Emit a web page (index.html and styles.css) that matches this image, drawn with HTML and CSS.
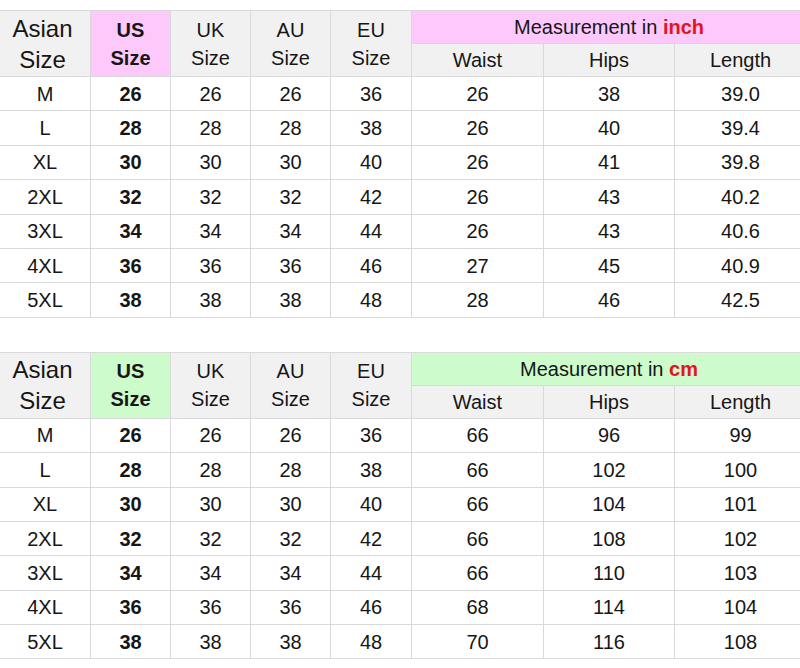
FILE: index.html
```html
<!DOCTYPE html>
<html lang="en">
<head>
<meta charset="utf-8">
<title>Size chart</title>
<link rel="stylesheet" href="styles.css">
</head>
<body>
<div class="page">
  <table class="chart chart-inch">
    <colgroup>
      <col class="c-asian"><col class="c-std"><col class="c-std"><col class="c-std"><col class="c-eu">
      <col class="c-meas"><col class="c-meas2"><col class="c-meas">
    </colgroup>
    <thead>
      <tr class="h1">
        <th rowspan="2" class="asian">Asian<br>Size</th>
        <th rowspan="2" class="us">US<br>Size</th>
        <th rowspan="2">UK<br>Size</th>
        <th rowspan="2">AU<br>Size</th>
        <th rowspan="2">EU<br>Size</th>
        <th colspan="3" class="meas">Measurement in <b class="unit">inch</b></th>
      </tr>
      <tr class="h2">
        <th>Waist</th><th>Hips</th><th>Length</th>
      </tr>
    </thead>
    <tbody>
      <tr><td>M</td><td class="b">26</td><td>26</td><td>26</td><td>36</td><td>26</td><td>38</td><td>39.0</td></tr>
      <tr><td>L</td><td class="b">28</td><td>28</td><td>28</td><td>38</td><td>26</td><td>40</td><td>39.4</td></tr>
      <tr><td>XL</td><td class="b">30</td><td>30</td><td>30</td><td>40</td><td>26</td><td>41</td><td>39.8</td></tr>
      <tr><td>2XL</td><td class="b">32</td><td>32</td><td>32</td><td>42</td><td>26</td><td>43</td><td>40.2</td></tr>
      <tr><td>3XL</td><td class="b">34</td><td>34</td><td>34</td><td>44</td><td>26</td><td>43</td><td>40.6</td></tr>
      <tr><td>4XL</td><td class="b">36</td><td>36</td><td>36</td><td>46</td><td>27</td><td>45</td><td>40.9</td></tr>
      <tr><td>5XL</td><td class="b">38</td><td>38</td><td>38</td><td>48</td><td>28</td><td>46</td><td>42.5</td></tr>
    </tbody>
  </table>

  <table class="chart chart-cm">
    <colgroup>
      <col class="c-asian"><col class="c-std"><col class="c-std"><col class="c-std"><col class="c-eu">
      <col class="c-meas"><col class="c-meas2"><col class="c-meas">
    </colgroup>
    <thead>
      <tr class="h1">
        <th rowspan="2" class="asian">Asian<br>Size</th>
        <th rowspan="2" class="us">US<br>Size</th>
        <th rowspan="2">UK<br>Size</th>
        <th rowspan="2">AU<br>Size</th>
        <th rowspan="2">EU<br>Size</th>
        <th colspan="3" class="meas">Measurement in <b class="unit">cm</b></th>
      </tr>
      <tr class="h2">
        <th>Waist</th><th>Hips</th><th>Length</th>
      </tr>
    </thead>
    <tbody>
      <tr><td>M</td><td class="b">26</td><td>26</td><td>26</td><td>36</td><td>66</td><td>96</td><td>99</td></tr>
      <tr><td>L</td><td class="b">28</td><td>28</td><td>28</td><td>38</td><td>66</td><td>102</td><td>100</td></tr>
      <tr><td>XL</td><td class="b">30</td><td>30</td><td>30</td><td>40</td><td>66</td><td>104</td><td>101</td></tr>
      <tr><td>2XL</td><td class="b">32</td><td>32</td><td>32</td><td>42</td><td>66</td><td>108</td><td>102</td></tr>
      <tr><td>3XL</td><td class="b">34</td><td>34</td><td>34</td><td>44</td><td>66</td><td>110</td><td>103</td></tr>
      <tr><td>4XL</td><td class="b">36</td><td>36</td><td>36</td><td>46</td><td>68</td><td>114</td><td>104</td></tr>
      <tr><td>5XL</td><td class="b">38</td><td>38</td><td>38</td><td>48</td><td>70</td><td>116</td><td>108</td></tr>
    </tbody>
  </table>
</div>
</body>
</html>
```

FILE: styles.css
```css
html, body {
  margin: 0;
  padding: 0;
  background: #ffffff;
  overflow: hidden;
}

.page {
  width: 800px;
  height: 668px;
  overflow: hidden;
  padding-top: 10px;
  box-sizing: border-box;
  font-family: "Liberation Sans", Arial, sans-serif;
  color: #161616;
}

.chart {
  border-collapse: collapse;
  table-layout: fixed;
  width: 806px;
  margin-left: -1px;
}

.chart-cm {
  margin-top: 34px;
}

.c-asian { width: 91px; }
.c-std { width: 80px; }
.c-eu { width: 81px; }
.c-meas { width: 132px; }
.c-meas2 { width: 131px; }

.chart th,
.chart td {
  border: 1px solid #d9d9d9;
  text-align: center;
  padding: 0;
  font-size: 20px;
  font-weight: normal;
}

.chart th {
  background: #f1f1f1;
  line-height: 28px;
}

.chart .h1 th {
  height: 32px;
}

.chart .h2 th {
  height: 32px;
  line-height: 30px;
}

.chart th.asian {
  font-size: 24px;
  line-height: 31px;
  padding-right: 5px;
}

.chart th.us {
  font-weight: bold;
}

.chart-inch th.us,
.chart-inch th.meas {
  background: #fcc9fa;
}

.chart-cm th.us,
.chart-cm th.meas {
  background: #cdfbcb;
}

.chart th.meas {
  line-height: 30px;
}

.unit {
  color: #e5131d;
  font-weight: bold;
}

.chart td {
  height: 33.4px;
  line-height: 30px;
  background: #ffffff;
}

.chart td.b {
  font-weight: bold;
}
```
